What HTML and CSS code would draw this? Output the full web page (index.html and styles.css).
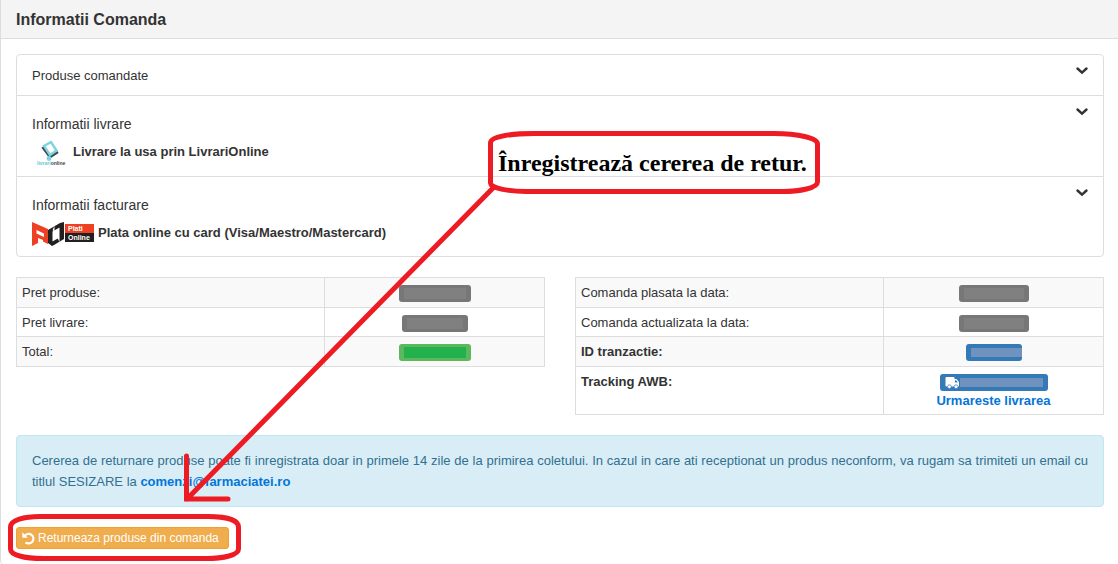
FILE: index.html
```html
<!DOCTYPE html>
<html lang="ro">

<head>
    <meta charset="UTF-8">
    <meta name="viewport" content="width=device-width, initial-scale=1.0">
    <title>Informatii Comanda</title>
    <link rel="stylesheet" href="styles.css">
</head>

<body>
    <div class="panel">
        <div class="panel-heading">
            <h1>Informatii Comanda</h1>
        </div>
        <div class="panel-body">

            <div class="list">
                <div class="list-item">
                    <p class="item-small">Produse comandate</p>
                    <button type="button" class="toggle" aria-label="Produse comandate">
                        <svg width="12" height="8" viewBox="0 0 12 8"><path d="M1.5 1.5L6 5.7L10.500 1.500" /></svg>
                    </button>
                </div>
                <div class="list-item">
                    <div class="item-content">
                        <h2>Informatii livrare</h2>
                        <div class="method">
                            <svg class="logo-livrari" width="37" height="28" viewBox="0 0 37 28">
                                <path d="M10.500 8L18 18L26 13" fill="none" stroke="#3c4a50" stroke-width="2.600" />
                                <path d="M12 7L19 3L24.500 11.500L18 16Z" fill="#fff" stroke="#7dd3e0" stroke-width="2.400" />
                                <circle cx="17" cy="19.500" r="2.400" fill="#7dd3e0" />
                                <text x="5" y="26" class="logo-name"><tspan fill="#62c6d6">livrari</tspan><tspan fill="#3c4a50">online</tspan></text>
                            </svg>
                            <strong>Livrare la usa prin LivrariOnline</strong>
                        </div>
                    </div>
                    <button type="button" class="toggle" aria-label="Informatii livrare">
                        <svg width="12" height="8" viewBox="0 0 12 8"><path d="M1.5 1.5L6 5.7L10.500 1.500" /></svg>
                    </button>
                </div>
                <div class="list-item">
                    <div class="item-content">
                        <h2>Informatii facturare</h2>
                        <div class="method">
                            <svg class="logo-plati" width="62" height="26" viewBox="0 0 62 26">
                                <path fill="#ee4023" fill-rule="evenodd" d="M0 1L16 8V23L11 20.500V19L6 17V22L0 25ZM4.500 9V12.500L12 16V12.500Z" />
                                <path fill="#231f20" fill-rule="evenodd" d="M16 9L28 2L32 1V18L22 24L20 25L16 22ZM20.500 10.500V20.500L27.500 16.500V6.500Z" />
                                <path fill="#fff" d="M20.500 9L22.500 5V11ZM25.500 17L27.500 16V21Z" />
                                <path fill="#ee4023" d="M33 3H62V12H33Z" />
                                <path fill="#231f20" d="M33 12H62V21H33Z" />
                                <text x="36" y="10" class="plati-text">Plati</text>
                                <text x="36" y="19" class="plati-text">Online</text>
                            </svg>
                            <strong>Plata online cu card (Visa/Maestro/Mastercard)</strong>
                        </div>
                    </div>
                    <button type="button" class="toggle" aria-label="Informatii facturare">
                        <svg width="12" height="8" viewBox="0 0 12 8"><path d="M1.5 1.5L6 5.7L10.500 1.500" /></svg>
                    </button>
                </div>
            </div>

            <div class="row">
                <table>
                    <tr>
                        <td>Pret produse:</td>
                        <td class="value"><span class="label label-price"><span class="mask"></span></span></td>
                    </tr>
                    <tr>
                        <td>Pret livrare:</td>
                        <td class="value"><span class="label label-short"><span class="mask"></span></span></td>
                    </tr>
                    <tr>
                        <td>Total:</td>
                        <td class="value"><span class="label label-price label-success"><span class="mask"></span></span></td>
                    </tr>
                </table>

                <table>
                    <tr>
                        <td>Comanda plasata la data:</td>
                        <td class="value"><span class="label"><span class="mask"></span></span></td>
                    </tr>
                    <tr>
                        <td>Comanda actualizata la data:</td>
                        <td class="value"><span class="label"><span class="mask"></span></span></td>
                    </tr>
                    <tr>
                        <td><strong>ID tranzactie:</strong></td>
                        <td class="value"><span class="label label-primary label-id"><span class="mask"></span></span></td>
                    </tr>
                    <tr>
                        <td><strong>Tracking AWB:</strong></td>
                        <td class="value">
                            <span class="label label-primary label-awb">
                                <svg width="15" height="12" viewBox="0 0 14 12">
                                    <path fill="#fff" fill-rule="evenodd" d="M1 0H8Q9 0 9 1V2H11L13.500 5V9.500H12.500A2 2 0 0 1 8.700 9.500H5.800A2 2 0 0 1 2 9.500H1Q0 9.500 0 8.500V1Q0 0 1 0ZM9.500 3.200V5.500H12.300L10.600 3.200Z" />
                                    <circle cx="3.900" cy="9.700" r="1.900" fill="#fff" stroke="#337ab7" stroke-width=".7" />
                                    <circle cx="10.600" cy="9.700" r="1.900" fill="#fff" stroke="#337ab7" stroke-width=".7" />
                                </svg>
                                <span class="mask"></span>
                            </span>
                            <a href="#">Urmareste livrarea</a>
                        </td>
                    </tr>
                </table>
            </div>

            <div class="alert">
                Cererea de returnare produse poate fi inregistrata doar in primele 14 zile de la primirea coletului. In cazul in care ati receptionat un produs neconform, va rugam sa trimiteti un email cu titlul SESIZARE la <a href="mailto:comenzi@farmaciatei.ro">comenzi@farmaciatei.ro</a>
            </div>

            <button type="button" class="btn-return">
                <svg width="13" height="13" viewBox="0 0 13 13"><path fill="none" stroke="#fff" stroke-width="2.200" d="M2.500 4.200A4.800 4.800 0 1 1 3.500 10.300" /><path fill="#fff" d="M.3.300L5.800 5.800H.3Z" /></svg>
                <span>Returneaza produse din comanda</span>
            </button>
        </div>
    </div>

    <!-- return instructions drawn over the order -->
    <svg class="notes" width="830" height="564" viewBox="0 0 830 564">
        <path d="M490.500 143C490.500 136 514 133.500 534 133.500H774C798 133.500 817.500 138 817.500 144V182C817.500 188 800 191.500 782 191.500H526C508 191.500 490.500 188 490.500 183Z" />
        <path d="M10.500 527C10.500 520 24 516.500 40 516.500H208C226 516.500 238.500 520 238.500 527V549C238.500 555 224 558.500 206 558.500H43C24 558.500 10.500 555 10.500 549Z" />
        <path d="M493 188L187 499M186.500 456V499H228" />
    </svg>
    <p class="note-text">Înregistrează cererea de retur.</p>
</body>

</html>
```
FILE: styles.css
```css
* {
    box-sizing: border-box;
}

body {
    margin: 0;
    background: #fff;
    color: #333;
    font-family: "Liberation Sans", Arial, sans-serif;
    font-size: 13px;
    line-height: 19px;
    position: relative;
}

h1, h2, p {
    margin: 0;
}

a {
    color: #0275d8;
    font-weight: bold;
    text-decoration: none;
}

svg {
    display: block;
    flex: none;
}

.panel {
    border-left: 1px solid #ddd;
    border-bottom-left-radius: 4px;
}

.panel-heading {
    padding: 10px 15px 9px;
    background: #f4f4f4;
    border-bottom: 1px solid #ddd;
}

.panel-heading h1 {
    font-size: 16px;
    line-height: 19px;
}

.panel-body {
    padding: 15px 14px 15px 15px;
}

/* order sections */
.list {
    border: 1px solid #ddd;
    border-radius: 4px;
    margin-bottom: 20px;
}

.list-item {
    display: flex;
    justify-content: space-between;
    align-items: flex-start;
    padding: 11px 15px 10px;
}

.list-item + .list-item {
    border-top: 1px solid #ddd;
}

.list-item:last-child {
    padding-bottom: 9px;
}

.item-content {
    padding: 8px 0 0;
}

.list-item h2 {
    font-size: 14px;
    font-weight: normal;
    line-height: 19px;
}

.method {
    display: flex;
    align-items: center;
    gap: 4px;
    height: 32px;
    padding-top: 6px;
}

.method strong {
    line-height: 19px;
    padding-bottom: 3px;
}

.logo-name {
    font-size: 5px;
    font-weight: bold;
}

.plati-text {
    fill: #fff;
    font-size: 7px;
    font-weight: bold;
}

.toggle {
    border: none;
    background: none;
    padding: 1px 0;
    cursor: pointer;
}

.toggle path {
    fill: none;
    stroke: #333;
    stroke-width: 2.4;
    stroke-linecap: round;
}

/* price and status tables */
.row {
    display: flex;
    align-items: flex-start;
    gap: 30px;
    margin-bottom: 20px;
}

table {
    flex: 1;
    border-collapse: collapse;
    table-layout: fixed;
    width: 50%;
}

tr:nth-child(odd) {
    background: #f9f9f9;
}

td {
    border: 1px solid #ddd;
    padding: 5px;
    vertical-align: top;
}

tr:nth-child(even) td {
    padding-bottom: 4px;
}

.value {
    width: 220px;
    text-align: center;
}

.value a {
    display: block;
}

.label {
    display: flex;
    align-items: center;
    width: 70px;
    height: 17px;
    margin: 2px auto 0;
    padding: 0 5px;
    border-radius: 3px;
    background: #777;
}

.label .mask {
    flex: 1;
    height: 11px;
    background: #808080;
}

.label-short {
    width: 66px;
}

.label-price {
    width: 72px;
}

.label-success {
    background: #5cb85c;
}

.label-success .mask {
    background: #22b14c;
}

.label-primary {
    background: #337ab7;
}

.label-primary .mask {
    height: 9px;
    background: #7092be;
}

.label-id {
    width: 56px;
    padding-right: 0;
}

.label-awb {
    width: 108px;
}

.alert {
    padding: 14px 15px;
    margin-bottom: 20px;
    border: 1px solid #bce8f1;
    border-radius: 4px;
    background: #d9edf7;
    color: #31708f;
    line-height: 21px;
    text-align: justify;
}

.btn-return {
    display: flex;
    align-items: center;
    gap: 3px;
    height: 22px;
    padding: 0 9px 0 5px;
    border: 1px solid #eea236;
    border-radius: 3px;
    background: #f0ad4e;
    color: #fff;
    font-family: inherit;
    font-size: 12px;
    cursor: pointer;
}

/* hand drawn notes */
.notes {
    position: absolute;
    top: 0;
    left: 0;
    pointer-events: none;
}

.notes path {
    fill: none;
    stroke: #ed1c24;
    stroke-width: 5;
    stroke-linecap: round;
}

.note-text {
    position: absolute;
    top: 149px;
    left: 498px;
    color: #000;
    font-family: "Liberation Serif", "Times New Roman", serif;
    font-size: 24px;
    font-weight: bold;
    line-height: 28px;
    white-space: nowrap;
}
```
